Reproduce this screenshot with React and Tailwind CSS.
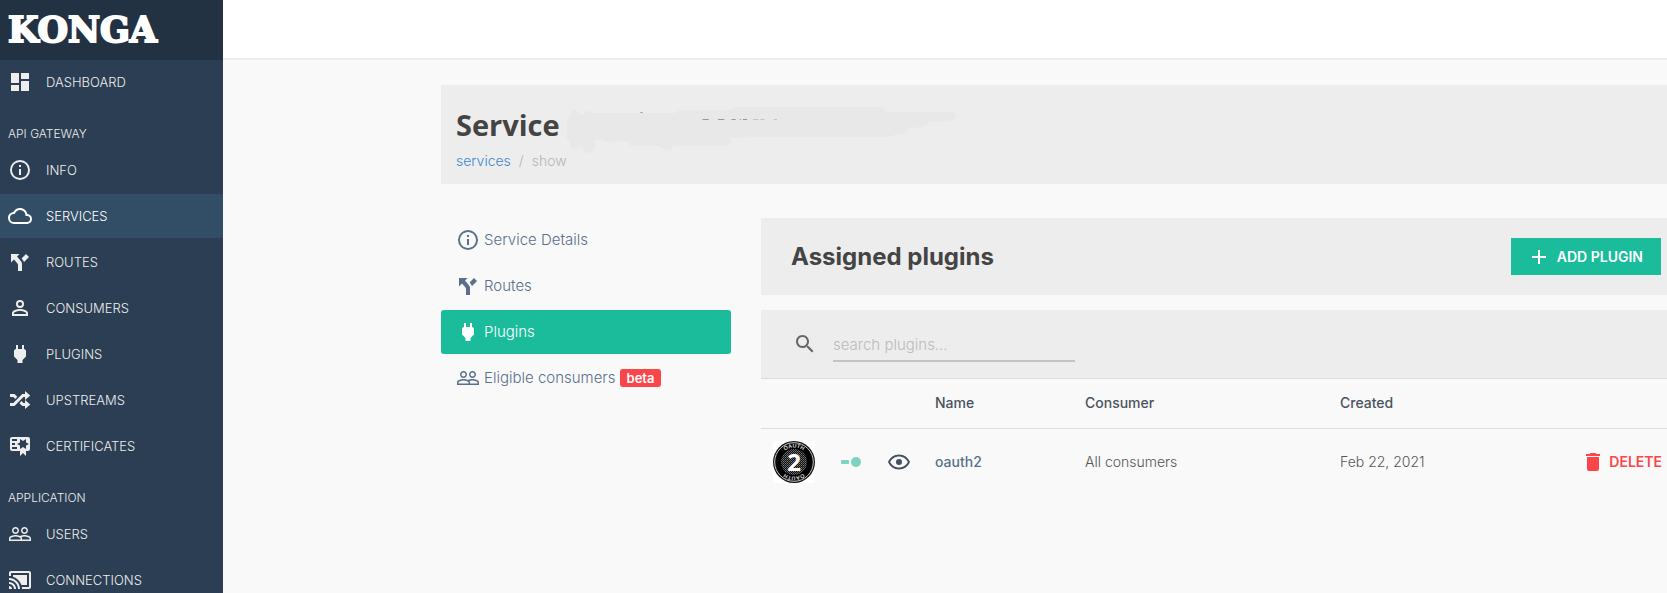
import React from "react";

const icons = {
  dashboard: "M13,3V9H21V3M13,21H21V11H13M3,21H11V15H3M3,13H11V3H3V13Z",
  info: "M11,9H13V7H11M12,20C7.59,20 4,16.41 4,12C4,7.59 7.59,4 12,4C16.41,4 20,7.59 20,12C20,16.41 16.41,20 12,20M12,2A10,10 0 0,0 2,12A10,10 0 0,0 12,22A10,10 0 0,0 22,12A10,10 0 0,0 12,2M11,17H13V11H11V17Z",
  cloud: "M19,18H6A4,4 0 0,1 2,14A4,4 0 0,1 6,10H6.71C7.37,7.69 9.5,6 12,6A5.5,5.5 0 0,1 17.5,11.5V12H19A3,3 0 0,1 22,15A3,3 0 0,1 19,18M19.35,10.03C18.67,6.59 15.64,4 12,4C9.11,4 6.6,5.64 5.35,8.03C2.34,8.36 0,10.9 0,14A6,6 0 0,0 6,20H19A5,5 0 0,0 24,15C24,12.36 21.95,10.22 19.35,10.03Z",
  fork: "M3,4V12.5L6,9.5L9,13C10,14 10,15 10,15V21H14V14C14,14 14,13 13.47,12C12.94,11 12,10 12,10L9,6.58L11.5,4M18,4L13.54,8.47L14,9C14,9 14.93,10 15.47,11C15.68,11.4 15.8,11.79 15.87,12.13L21,7Z",
  account: "M12,13C9.33,13 4,14.33 4,17V20H20V17C20,14.33 14.67,13 12,13M12,4A4,4 0 0,0 8,8A4,4 0 0,0 12,12A4,4 0 0,0 16,8A4,4 0 0,0 12,4M12,14.9C14.97,14.9 18.1,16.36 18.1,17V18.1H5.9V17C5.9,16.36 9,14.9 12,14.9M12,5.9A2.1,2.1 0 0,1 14.1,8A2.1,2.1 0 0,1 12,10.1A2.1,2.1 0 0,1 9.9,8A2.1,2.1 0 0,1 12,5.9Z",
  plug: "M16,7V3H14V7H10V3H8V7H8C7,7 6,8 6,9V14.5L9.5,18V21H14.5V18L18,14.5V9C18,8 17,7 16,7Z",
  shuffle: "M17,3L22.25,7.5L17,12L22.25,16.5L17,21V18H14.26L11.44,15.18L13.56,13.06L15.5,15H17V12L17,9H15.5L6.5,18H2V15H5.26L14.26,6H17V3M2,6H6.5L9.32,8.82L7.2,10.94L5.26,9H2V6Z",
  certificate: "M4,3C2.89,3 2,3.89 2,5V15A2,2 0 0,0 4,17H12V22L15,19L18,22V17H20A2,2 0 0,0 22,15V5A2,2 0 0,0 20,3H4M12,5L15,7L18,5V8.5L21,10L18,11.5V15L15,13L12,15V11.5L9,10L12,8.5V5M4,5H9V7H4V5M4,9H7V11H4V9M4,13H9V15H4V13Z",
  people: "M16.5 13c-1.2 0-3.07.34-4.5 1-1.43-.67-3.3-1-4.5-1C5.33 13 1 14.08 1 16.25V19h22v-2.75c0-2.17-4.33-3.25-6.5-3.25zm-4 4.5h-10v-1.25c0-.54 2.56-1.75 5-1.75s5 1.21 5 1.75v1.25zm9 0H14v-1.25c0-.46-.2-.86-.52-1.22.88-.3 1.96-.53 3.02-.53 2.44 0 5 1.21 5 1.75v1.25zM7.5 12c1.93 0 3.5-1.57 3.5-3.5S9.43 5 7.5 5 4 6.57 4 8.5 5.57 12 7.5 12zm0-5.5c1.1 0 2 .9 2 2s-.9 2-2 2-2-.9-2-2 .9-2 2-2zm9 5.5c1.93 0 3.5-1.57 3.5-3.5S18.43 5 16.5 5 13 6.57 13 8.5s1.57 3.5 3.5 3.5zm0-5.5c1.1 0 2 .9 2 2s-.9 2-2 2-2-.9-2-2 .9-2 2-2z",
  cast: "M1 18v3h3c0-1.66-1.34-3-3-3zm0-4v2c2.76 0 5 2.24 5 5h2c0-3.87-3.13-7-7-7zm18-7H5v1.63c3.96 1.28 7.09 4.41 8.37 8.37H19V7zM1 10v2c4.97 0 9 4.03 9 9h2c0-6.08-4.93-11-11-11zm20-7H3c-1.1 0-2 .9-2 2v3h2V5h18v14h-7v2h7c1.1 0 2-.9 2-2V5c0-1.1-.9-2-2-2z",
  search: "M15.5 14h-.79l-.28-.27C15.41 12.59 16 11.11 16 9.5 16 5.91 13.09 3 9.5 3S3 5.91 3 9.5 5.91 16 9.5 16c1.61 0 3.09-.59 4.23-1.57l.27.28v.79l5 4.99L20.49 19l-4.99-5zm-6 0C7.01 14 5 11.99 5 9.5S7.01 5 9.5 5 14 7.01 14 9.5 11.99 14 9.5 14z",
  eye: "M12,9A3,3 0 0,1 15,12A3,3 0 0,1 12,15A3,3 0 0,1 9,12A3,3 0 0,1 12,9M12,4.5C17,4.5 21.27,7.61 23,12C21.27,16.39 17,19.5 12,19.5C7,19.5 2.73,16.39 1,12C2.73,7.61 7,4.5 12,4.5M3.18,12C4.83,15.36 8.24,17.5 12,17.5C15.76,17.5 19.17,15.36 20.82,12C19.17,8.64 15.76,6.5 12,6.5C8.24,6.5 4.83,8.64 3.18,12Z",
  plus: "M19,13H13V19H11V13H5V11H11V5H13V11H19V13Z",
  trash: "M6 19c0 1.1.9 2 2 2h8c1.1 0 2-.9 2-2V7H6v12zM19 4h-3.5l-1-1h-5l-1 1H5v2h14V4z",
};

function Icon({ name }) {
  return (
    <svg viewBox="0 0 24 24" className="size-6 shrink-0 fill-current" aria-hidden="true">
      <path d={icons[name]} />
    </svg>
  );
}

const menu = [
  { items: [["dashboard", "DASHBOARD"]] },
  {
    title: "API GATEWAY",
    items: [
      ["info", "INFO"],
      ["cloud", "SERVICES"],
      ["fork", "ROUTES"],
      ["account", "CONSUMERS"],
      ["plug", "PLUGINS"],
      ["shuffle", "UPSTREAMS"],
      ["certificate", "CERTIFICATES"],
    ],
  },
  {
    title: "APPLICATION",
    items: [
      ["people", "USERS"],
      ["cast", "CONNECTIONS"],
    ],
  },
];

function Sidebar() {
  return (
    <aside className="w-[223px] shrink-0 overflow-hidden bg-[#2b3e53] text-[13px] text-[#eeeeee]">
      <div className="flex h-[60px] items-center bg-[#223242] px-2 pb-0.5">
        <span className="font-['DejaVu_Serif',serif] text-[35px] leading-none font-bold text-white [-webkit-text-stroke:2px_white]">
          KONGA
        </span>
      </div>
      <nav>
        {menu.map((group, i) => (
          <div key={i}>
            {group.title && <h2 className="px-2 pt-[18px] pb-1 text-xs leading-5 font-light">{group.title}</h2>}
            <ul>
              {group.items.map(([icon, label]) => (
                <li key={label} className="mb-0.5">
                  <a
                    href="#"
                    className={
                      label === "SERVICES"
                        ? "flex h-11 items-center gap-3.5 bg-[#324d66] px-2 text-white"
                        : "flex h-11 items-center gap-3.5 px-2"
                    }
                  >
                    <Icon name={icon} />
                    <span>{label}</span>
                  </a>
                </li>
              ))}
            </ul>
          </div>
        ))}
      </nav>
    </aside>
  );
}

function Smear() {
  return (
    <svg
      className="absolute top-[22px] left-[125px] h-[48px] w-[393px]"
      viewBox="0 0 380 48"
      preserveAspectRatio="none"
      aria-hidden="true"
    >
      <path
        fill="#e8e8e8"
        d="M5 5Q8 0 12 5L14 8L18 7Q21 1 26 6H106Q108 3 114 3H158Q162 0 168 0H302Q308 0 309 5H372Q378 6 377 10Q377 13 372 14L350 15Q350 19 345 20L331 21Q330 27 324 27H319Q316 30 310 30H178L159 31Q161 38 155 39H104Q102 45 97 43L90 39H66Q60 39 60 34L40 35L36 33H28V40Q27 46 21 46Q17 45 16 39L14 37Q13 42 7 41Q3 40 4 35Q-1 33 1 28V14Q1 9 5 9Z"
      />
      <path stroke="#999999" d="M72 5.500H74M132 12.500H138M147 12.500H153M160 12.500H164M168 12.500H169M171 12.500H175" />
      <path stroke="#c4c4c4" d="M181 12.500H186M188 12.500H192M201 12.500H204" />
    </svg>
  );
}

function OauthBadge() {
  return (
    <svg viewBox="0 0 42 42" className="size-[42px]" role="img" aria-label="OAuth 2">
      <defs>
        <pattern id="dots" width="2" height="2" patternUnits="userSpaceOnUse">
          <rect width="2" height="2" fill="#111111" />
          <rect width="1" height="1" fill="#777777" />
          <rect x="1" y="1" width="1" height="1" fill="#555555" />
        </pattern>
        <path id="arcTop" d="M6.500 21A14.500 14.500 0 0 1 35.500 21" />
        <path id="arcBottom" d="M35.500 21A14.500 14.500 0 0 1 6.500 21" />
      </defs>
      <rect width="42" height="42" fill="#ffffff" />
      <circle cx="21" cy="21" r="21" fill="#111111" />
      <circle cx="21" cy="21" r="19.300" fill="#000000" stroke="#c8c8c8" strokeWidth="1" />
      <circle cx="21" cy="21" r="13" fill="url(#dots)" />
      <g fill="#dddddd" fontFamily="Liberation Sans, sans-serif" fontWeight="bold" fontSize="5.500" textAnchor="middle">
        <text>
          <textPath href="#arcTop" startOffset="50%">OAUTH</textPath>
        </text>
        <text>
          <textPath href="#arcBottom" startOffset="50%">OAUTH</textPath>
        </text>
      </g>
      <text x="21" y="30" fill="#ffffff" fontFamily="Open Sans, sans-serif" fontWeight="bold" fontSize="24" textAnchor="middle">
        2
      </text>
    </svg>
  );
}

const tabs = [
  ["info", "Service Details"],
  ["fork", "Routes"],
  ["plug", "Plugins"],
  ["people", "Eligible consumers"],
];

function ServiceTabs() {
  return (
    <nav className="flex w-[290px] shrink-0 flex-col gap-0.5 text-[15px] text-[#5a708a]">
      {tabs.map(([icon, label]) => (
        <a
          key={label}
          href="#"
          className={
            label === "Plugins"
              ? "flex h-11 items-center gap-1 rounded-[3px] bg-[#1abc9c] px-[15px] text-white"
              : "flex h-11 items-center gap-1 rounded-[3px] px-[15px]"
          }
        >
          <Icon name={icon} />
          <span>{label}</span>
          {label === "Eligible consumers" && (
            <span className="flex h-[18px] items-center rounded-[3px] bg-[#fa4549] px-[7px] text-[13px] font-semibold text-white">
              beta
            </span>
          )}
        </a>
      ))}
    </nav>
  );
}

function PluginsTable() {
  return (
    <table className="w-full table-fixed text-left text-[#555555]">
      <colgroup>
        <col className="w-[66px]" />
        <col className="w-12" />
        <col className="w-12" />
        <col className="w-[150px]" />
        <col className="w-[255px]" />
        <col className="w-[200px]" />
        <col />
      </colgroup>
      <thead>
        <tr className="h-[49px] border-b border-[#dddddd] text-[#4a5360]">
          <td></td>
          <td></td>
          <td></td>
          <th className="px-3 font-medium">Name</th>
          <th className="px-3 font-medium">Consumer</th>
          <th className="px-3 font-medium">Created</th>
          <td></td>
        </tr>
      </thead>
      <tbody>
        <tr className="h-[67px]">
          <td className="pl-3">
            <OauthBadge />
          </td>
          <td>
            <label className="relative flex justify-center">
              <input type="checkbox" defaultChecked aria-label="Enable oauth2" className="peer sr-only" />
              <svg viewBox="0 0 20 12" className="h-3 w-5" fill="#7dd3c0">
                <rect y="4" width="8" height="4" rx="1" />
                <circle cx="15" cy="6" r="5" />
              </svg>
            </label>
          </td>
          <td>
            <button type="button" aria-label="View oauth2" className="mx-auto flex text-[#44505f]">
              <Icon name="eye" />
            </button>
          </td>
          <td className="px-3">
            <a href="#" className="font-medium text-[#5a708a]">
              oauth2
            </a>
          </td>
          <td className="px-3">All consumers</td>
          <td className="px-3">Feb 22, 2021</td>
          <td className="pr-[5px]">
            <button type="button" className="ml-auto flex items-center gap-1 font-semibold text-[#fa4549]">
              <Icon name="trash" />
              DELETE
            </button>
          </td>
        </tr>
      </tbody>
    </table>
  );
}

export default function App() {
  return (
    <div className="flex h-screen overflow-hidden bg-[#f9f9f9] font-[Inter,sans-serif] text-sm leading-5 font-light">
      <Sidebar />
      <div className="min-w-0 flex-1">
        <header className="h-[60px] border-b-2 border-[#ededed] bg-white" />
        <main className="pt-[25px] pl-[218px]">
          <section className="relative bg-[#ededed] px-[15px] pt-5 pb-[13px]">
            <Smear />
            <h1 className="relative font-['Open_Sans',sans-serif] text-[29px] leading-10 font-bold text-[#444444]">Service</h1>
            <div className="mt-1.5 flex gap-2 text-[#b5b5b5]">
              <a href="#" className="text-[#3d85cf]">
                services
              </a>
              <span>/</span>
              <span>show</span>
            </div>
          </section>
          <div className="mt-[34px] flex gap-[30px]">
            <ServiceTabs />
            <div className="min-w-0 flex-1">
              <div className="flex h-[77px] items-center justify-between bg-[#ededed] pr-1.5 pl-[30px]">
                <h2 className="text-2xl font-bold text-[#444444]">Assigned plugins</h2>
                <button type="button" className="flex h-[37px] items-center gap-1.5 bg-[#1abc9c] pr-[18px] pl-4 font-semibold text-white">
                  <Icon name="plus" />
                  ADD PLUGIN
                </button>
              </div>
              <div className="mt-[15px] flex h-[69px] items-center gap-4 border-b border-[#dddddd] bg-[#ededed] px-8 text-[#666666]">
                <Icon name="search" />
                <input
                  type="text"
                  aria-label="search plugins"
                  placeholder="search plugins..."
                  className="mt-0.5 h-[34px] w-[242px] border-b-2 border-[#c4c4c4] bg-transparent text-[15px] outline-none placeholder:text-[#bbbbbb]"
                />
              </div>
              <PluginsTable />
            </div>
          </div>
        </main>
      </div>
    </div>
  );
}
